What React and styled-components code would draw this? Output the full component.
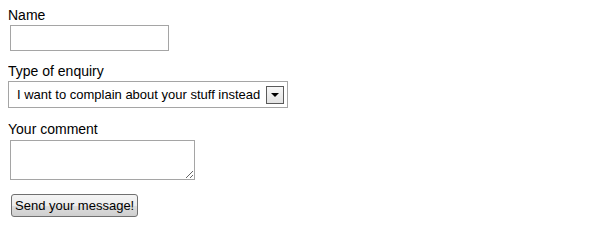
import React from 'react';
import styled, { createGlobalStyle } from 'styled-components';

const GlobalStyle = createGlobalStyle`
  body {
    margin: 8px;
    background: #fff;
    font-family: "Liberation Sans", Arial, sans-serif;
    font-size: 13px;
    color: #000;
  }
`;

const Form = styled.form`
  display: flex;
  flex-direction: column;
  align-items: flex-start;
`;

const Field = styled.div`
  display: flex;
  flex-direction: column;
  align-items: flex-start;
  margin-bottom: ${(p) => p.gap || 13}px;
`;

const Label = styled.label`
  display: block;
  font-size: 14px;
  line-height: 15px;
  margin-bottom: ${(p) => p.space || 2}px;
`;

const TextInput = styled.input`
  box-sizing: border-box;
  width: 159px;
  height: 26px;
  margin: 0 0 0 2px;
  border: 1px solid #a5a5a5;
  background: #fff;
  font: 13px "Liberation Sans", Arial, sans-serif;
  padding: 2px 4px;
  outline: none;
`;

const SelectBox = styled.div`
  box-sizing: border-box;
  display: flex;
  align-items: center;
  width: 280px;
  height: 27px;
  border: 1px solid #a5a5a5;
  background: #fff;
  padding: 0 3px 0 0;
`;

const Select = styled.select`
  appearance: none;
  -webkit-appearance: none;
  flex: 1;
  min-width: 0;
  height: 100%;
  border: none;
  background: transparent;
  font: 13px "Liberation Sans", Arial, sans-serif;
  color: #000;
  padding: 0 0 0 8px;
  outline: none;
`;

const Arrow = styled.span`
  box-sizing: border-box;
  flex: none;
  display: flex;
  align-items: center;
  justify-content: center;
  width: 18px;
  height: 18px;
  border: 1px solid #5a5a5a;
  background: linear-gradient(#f7f7f7, #e3e3e3);
`;

const TextArea = styled.textarea`
  box-sizing: border-box;
  width: 185px;
  height: 40px;
  margin: 0 0 0 2px;
  border: 1px solid #a5a5a5;
  font: 13px "Liberation Sans", Arial, sans-serif;
  outline: none;
`;

const Button = styled.button`
  box-sizing: border-box;
  margin: 0 0 0 3px;
  height: 23px;
  padding: 0 3px;
  border: 1px solid #707070;
  border-radius: 3px;
  background: linear-gradient(#f4f4f4 0%, #ececec 50%, #dddddd 51%, #cfcfcf 100%);
  font: 13px "Liberation Sans", Arial, sans-serif;
  color: #000;
`;

export default function App() {
  return (
    <>
      <GlobalStyle />
      <Form onSubmit={(e) => e.preventDefault()}>
        <Field>
          <Label htmlFor="name">Name</Label>
          <TextInput id="name" type="text" />
        </Field>
        <Field gap={14}>
          <Label htmlFor="type">Type of enquiry</Label>
          <SelectBox>
            <Select id="type" defaultValue="complain">
              <option value="complain">I want to complain about your stuff instead</option>
            </Select>
            <Arrow>
              <svg width="8" height="4" viewBox="0 0 8 4">
                <path d="M0 0h8L4 4z" fill="#000" />
              </svg>
            </Arrow>
          </SelectBox>
        </Field>
        <Field gap={14}>
          <Label htmlFor="comment" space={3}>Your comment</Label>
          <TextArea id="comment" />
        </Field>
        <Button type="submit">Send your message!</Button>
      </Form>
    </>
  );
}
